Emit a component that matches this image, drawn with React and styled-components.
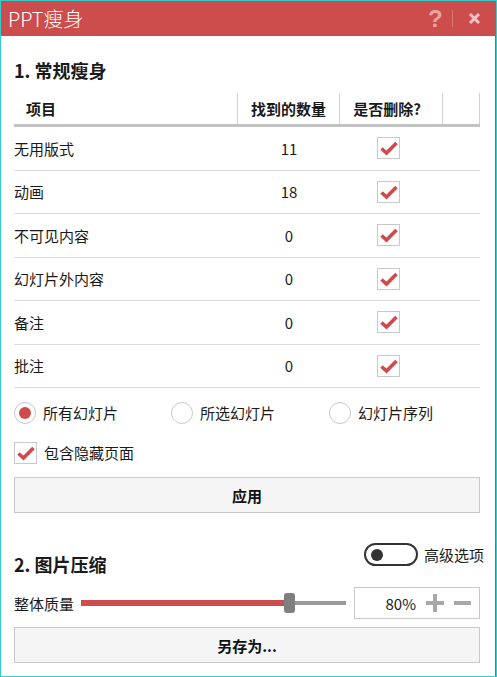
import React from "react";
import styled, { createGlobalStyle } from "styled-components";

const FONT = `"Noto Sans CJK SC", "Noto Sans", sans-serif`;
const RED = "#cd4c4c";

const GlobalStyle = createGlobalStyle`
  html, body { margin: 0; padding: 0; background: #ffffff; }
  * { box-sizing: border-box; }
`;

const Frame = styled.div`
  width: 497px;
  height: 677px;
  border: 1px solid #34cccc;
  background: #ffffff;
  font-family: ${FONT};
  color: #1a1a1a;
`;

const Window = styled.div`
  height: 100%;
  border-right: 1px solid ${RED};
  display: flex;
  flex-direction: column;
`;

const TitleBar = styled.div`
  height: 35px;
  background: ${RED};
  display: flex;
  align-items: center;
  padding-left: 7px;
  padding-right: 14px;
  flex-shrink: 0;
`;

const Title = styled.div`
  color: #ffffff;
  font-size: 20px;
  font-weight: 300;
  line-height: 35px;
  flex: 1;
  margin-top: -1px;
`;

const HelpIcon = styled.span`
  font-family: "Liberation Sans", Arial, sans-serif;
  font-weight: bold;
  font-size: 24px;
  line-height: 35px;
  color: #e9a3a3;
  width: 14px;
  text-align: center;
`;

const TitleDivider = styled.span`
  width: 1px;
  height: 17px;
  background: #d97373;
  margin: 0 15px 0 10px;
`;

const Content = styled.div`
  padding: 0 15px 0 13px;
  display: flex;
  flex-direction: column;
`;

const SectionTitle = styled.div`
  font-size: 18px;
  font-weight: 700;
  line-height: 24px;
  height: 24px;
  margin-top: ${(p) => p.$mt || 0}px;
`;

const Table = styled.div`
  margin-top: 11px;
  display: flex;
  flex-direction: column;
`;

const COLS = "224px 102px 103px 1fr";

const HeaderRow = styled.div`
  display: grid;
  grid-template-columns: ${COLS};
  height: 34px;
  border-bottom: 3px solid #c2c2c2;
`;

const HeaderCell = styled.div`
  font-size: 15px;
  font-weight: 700;
  display: flex;
  align-items: center;
  justify-content: ${(p) => (p.$center ? "center" : "flex-start")};
  padding-left: ${(p) => (p.$center ? 0 : 12)}px;
  padding-right: ${(p) => p.$pr || 0}px;
  border-right: 1px solid #d2d2d2;
  ${(p) => (p.$first ? "border-right: 1px solid #d2d2d2;" : "")}
`;

const Row = styled.div`
  display: grid;
  grid-template-columns: ${COLS};
  height: 43.5px;
  border-bottom: 1px solid #dcdcdc;
`;

const Cell = styled.div`
  font-size: 15px;
  display: flex;
  align-items: center;
  justify-content: ${(p) => (p.$center ? "center" : "flex-start")};
  padding-right: ${(p) => p.$pr || 0}px;
`;

const Box = styled.span`
  width: 23px;
  height: 22px;
  border: 1px solid #c9c9c9;
  background: #ffffff;
  display: inline-flex;
  align-items: center;
  justify-content: center;
  flex-shrink: 0;
`;

const Check = () => (
  <Box>
    <svg width="21" height="20" viewBox="0 0 21 20">
      <polyline
        points="3.5,10.5 8.5,15 18.5,5"
        fill="none"
        stroke="#cf4a4a"
        strokeWidth="3.6"
      />
    </svg>
  </Box>
);

const RadioRow = styled.div`
  margin-top: 14px;
  height: 22px;
  display: grid;
  grid-template-columns: 157px 158px 1fr;
`;

const OptionLabel = styled.label`
  display: flex;
  align-items: center;
  gap: 7px;
  font-size: 15px;
  line-height: 22px;
`;

const RadioCircle = styled.span`
  width: 22px;
  height: 22px;
  border-radius: 50%;
  border: 1px solid #c9c9c9;
  display: inline-flex;
  align-items: center;
  justify-content: center;
  flex-shrink: 0;
  &::after {
    content: "";
    width: 12px;
    height: 12px;
    border-radius: 50%;
    background: ${(p) => (p.$on ? "#cf4a4a" : "transparent")};
  }
`;

const CheckRow = styled.div`
  margin-top: 18px;
  height: 22px;
  display: flex;
`;

const Button = styled.button`
  margin-top: ${(p) => p.$mt}px;
  height: 36px;
  width: 100%;
  background: #f5f5f5;
  border: 1px solid #c9c9c9;
  font-family: ${FONT};
  font-size: 15px;
  font-weight: 700;
  color: #111;
  padding: 0;
  cursor: pointer;
`;

const Section2Header = styled.div`
  margin-top: 27px;
  height: 38px;
  display: flex;
  justify-content: space-between;
  align-items: flex-start;
`;

const AdvGroup = styled.div`
  margin-top: 3px;
  margin-right: -4px;
  display: flex;
  align-items: center;
  gap: 6px;
  font-size: 15px;
`;

const Toggle = styled.span`
  width: 54px;
  height: 23px;
  border: 2.5px solid #333333;
  border-radius: 12px;
  display: inline-flex;
  align-items: center;
  padding-left: 5px;
  &::after {
    content: "";
    width: 12px;
    height: 12px;
    border-radius: 50%;
    background: #333333;
  }
`;

const SliderRow = styled.div`
  margin-top: 9px;
  height: 32px;
  display: flex;
  align-items: center;
`;

const SliderLabel = styled.span`
  font-size: 15px;
  width: 67px;
  flex-shrink: 0;
`;

const Slider = styled.div`
  width: 265px;
  display: flex;
  align-items: center;
`;

const FillTrack = styled.span`
  height: 6px;
  background: #cd4c4c;
`;

const Thumb = styled.span`
  width: 11px;
  height: 20px;
  border-radius: 3px;
  background: #7f7f7f;
  flex-shrink: 0;
`;

const RestTrack = styled.span`
  flex: 1;
  height: 4px;
  background: #9b9b9b;
`;

const ValueBox = styled.div`
  margin-left: 8px;
  flex: 1;
  height: 32px;
  border: 1px solid #c9c9c9;
  display: flex;
  align-items: center;
  justify-content: flex-end;
  padding-right: 8px;
  font-size: 15px;
`;

const Value = styled.span`
  margin-right: 10px;
`;

const StepIcon = styled.svg`
  display: block;
  margin-left: ${(p) => p.$ml || 0}px;
`;

const rows = [
  ["无用版式", "11"],
  ["动画", "18"],
  ["不可见内容", "0"],
  ["幻灯片外内容", "0"],
  ["备注", "0"],
  ["批注", "0"],
];

export default function App() {
  const quality = 80;
  return (
    <>
      <GlobalStyle />
      <Frame>
        <Window>
          <TitleBar>
            <Title>PPT瘦身</Title>
            <HelpIcon>?</HelpIcon>
            <TitleDivider />
            <svg width="13" height="13" viewBox="0 0 13 13">
              <path d="M2 2 L11 11 M11 2 L2 11" stroke="#f1c3c3" strokeWidth="3" />
            </svg>
          </TitleBar>
          <Content>
            <SectionTitle $mt={22}>1. 常规瘦身</SectionTitle>
            <Table>
              <HeaderRow>
                <HeaderCell>项目</HeaderCell>
                <HeaderCell $center>找到的数量</HeaderCell>
                <HeaderCell $center $pr={8}>是否删除?</HeaderCell>
                <HeaderCell />
              </HeaderRow>
              {rows.map(([name, count]) => (
                <Row key={name}>
                  <Cell>{name}</Cell>
                  <Cell $center>{count}</Cell>
                  <Cell $center $pr={6}>
                    <Check />
                  </Cell>
                  <Cell />
                </Row>
              ))}
            </Table>
            <RadioRow>
              <OptionLabel>
                <RadioCircle $on />
                所有幻灯片
              </OptionLabel>
              <OptionLabel>
                <RadioCircle />
                所选幻灯片
              </OptionLabel>
              <OptionLabel>
                <RadioCircle />
                幻灯片序列
              </OptionLabel>
            </RadioRow>
            <CheckRow>
              <OptionLabel>
                <Check />
                包含隐藏页面
              </OptionLabel>
            </CheckRow>
            <Button $mt={13}>应用</Button>
            <Section2Header>
              <SectionTitle $mt={12}>2. 图片压缩</SectionTitle>
              <AdvGroup>
                <Toggle />
                高级选项
              </AdvGroup>
            </Section2Header>
            <SliderRow>
              <SliderLabel>整体质量</SliderLabel>
              <Slider>
                <FillTrack style={{ width: `${(quality / 100) * 254 - 0}px` }} />
                <Thumb />
                <RestTrack />
              </Slider>
              <ValueBox>
                <Value>{quality}%</Value>
                <StepIcon width="18" height="18" viewBox="0 0 18 18">
                  <path d="M0 9 H18 M9 0 V18" stroke="#a8a8a8" strokeWidth="4" />
                </StepIcon>
                <StepIcon $ml={10} width="17" height="18" viewBox="0 0 17 18">
                  <path d="M0 9 H17" stroke="#a8a8a8" strokeWidth="4" />
                </StepIcon>
              </ValueBox>
            </SliderRow>
            <Button $mt={8}>另存为...</Button>
          </Content>
        </Window>
      </Frame>
    </>
  );
}
